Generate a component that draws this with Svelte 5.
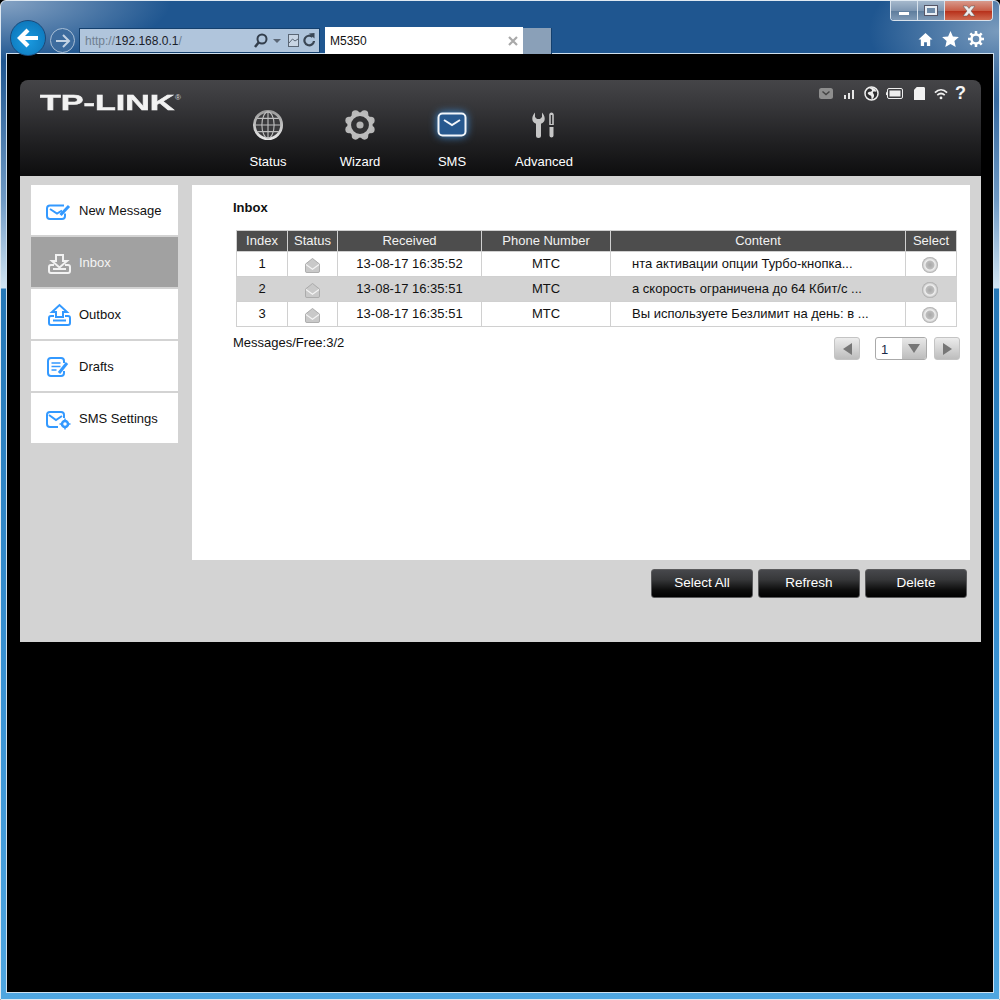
<script>
  const navItems = [
    { label: "Status", icon: "globe" },
    { label: "Wizard", icon: "gear" },
    { label: "SMS", icon: "mail", active: true },
    { label: "Advanced", icon: "tools" }
  ];

  const menu = [
    { label: "New Message", icon: "new" },
    { label: "Inbox", icon: "inbox", active: true },
    { label: "Outbox", icon: "outbox" },
    { label: "Drafts", icon: "drafts" },
    { label: "SMS Settings", icon: "settings" }
  ];

  const messages = [
    { index: 1, received: "13-08-17 16:35:52", phone: "МТС", content: "нта активации опции Турбо-кнопка..." },
    { index: 2, received: "13-08-17 16:35:51", phone: "МТС", content: "а скорость ограничена до 64 Кбит/с ..." },
    { index: 3, received: "13-08-17 16:35:51", phone: "МТС", content: "Вы используете Безлимит на день: в ..." }
  ];

  // bumps of the wizard gear
  const bumps = [0, 45, 90, 135, 180, 225, 270, 315].map((a) => ({
    x: 17 + 12.5 * Math.cos((a * Math.PI) / 180 + Math.PI / 8),
    y: 17 + 12.5 * Math.sin((a * Math.PI) / 180 + Math.PI / 8)
  }));
</script>

<div class="window">
  <div class="caption">
    <div class="controls">
      <span class="ctl"><i class="min"></i></span>
      <span class="ctl"><i class="max"></i></span>
      <span class="ctl close">
        <svg width="16" height="12" viewBox="0 0 16 12"><path d="M2 1h4l2 2.500L10 1h4l-4 5 4 5h-4L8 8.500 6 11H2l4-5z" fill="#eee" stroke="#555" stroke-width=".5"/></svg>
      </span>
    </div>
  </div>

  <div class="toolbar">
    <div class="back">
      <svg width="24" height="24" viewBox="0 0 24 24"><path d="M12 4 4 12l8 8M4.500 12H22" fill="none" stroke="#fff" stroke-width="4.200"/></svg>
    </div>
    <div class="forward">
      <svg width="16" height="16" viewBox="0 0 16 16"><path d="M8 2l6 6-6 6M13 8H1" fill="none" stroke="#c3d3e4" stroke-width="2"/></svg>
    </div>
    <div class="address">
      <span class="url">http://<b>192.168.0.1</b>/</span>
      <svg class="addr-icons" width="62" height="18" viewBox="0 0 62 18">
        <circle cx="9" cy="7" r="4.500" fill="none" stroke="#333e4c" stroke-width="2"/>
        <path d="M6 10 2 15" stroke="#333e4c" stroke-width="2.500"/>
        <path d="M20 7h8l-4 4z" fill="#5a6675"/>
        <rect x="35.500" y="2.500" width="10" height="12" fill="#c8d5e4" stroke="#5a6675"/>
        <path d="M36 11l3.500-4 2.500 2 3-2" fill="none" stroke="#5a6675"/>
        <path d="M59.500 5a4.800 4.800 0 1 0 1.500 4" fill="none" stroke="#3a4654" stroke-width="2.200"/>
        <path d="M56 1.500l5.500-.5 0 5.500z" fill="#3a4654"/>
      </svg>
    </div>
    <div class="tab">
      <span>M5350</span>
      <svg width="10" height="10" viewBox="0 0 10 10"><path d="M1 1l8 8M9 1l-8 8" stroke="#a9a9a9" stroke-width="2.200"/></svg>
    </div>
    <div class="newtab"></div>
    <div class="tools">
      <svg width="15" height="15" viewBox="0 0 16 16"><path d="M8 1 0.500 8H3v7h3.500v-4h3v4H13V8h2.500z" fill="#fff"/></svg>
      <svg width="17" height="16" viewBox="0 0 17 16"><path d="M8.500 0l2.400 5.500 6 .6-4.500 4 1.300 5.900-5.200-3-5.200 3 1.300-5.900-4.500-4 6-.6z" fill="#fff"/></svg>
      <svg width="16" height="16" viewBox="0 0 16 16"><circle cx="8" cy="8" r="4.500" fill="none" stroke="#fff" stroke-width="2.500"/><path d="M8 0v3M8 13v3M0 8h3M13 8h3M2.300 2.300l2.200 2.200M11.500 11.500l2.200 2.200M13.700 2.300l-2.200 2.200M4.500 11.500l-2.200 2.200" stroke="#fff" stroke-width="2.500"/></svg>
    </div>
  </div>

  <div class="viewport">
    <div class="panel">
      <header class="head">
        <div class="logo"><span class="logo-text">TP-LINK</span><sup>®</sup></div>
        <nav class="nav">
          {#each navItems as item}
            <div class="nav-item">
              <div class="nav-icon">
                {#if item.icon === "globe"}
                  <svg width="32" height="32" viewBox="0 0 34 34">
                    <defs>
                      <linearGradient id="ring" x1="0" y1="0" x2="0" y2="1">
                        <stop offset="0" stop-color="#9a9a9a" />
                        <stop offset=".6" stop-color="#c8c8c8" />
                        <stop offset="1" stop-color="#e6e6e6" />
                      </linearGradient>
                    </defs>
                    <circle cx="17" cy="17" r="14.500" fill="#3a3a3c" stroke="url(#ring)" stroke-width="3"/>
                    <g fill="none" stroke="#bdbdbd" stroke-width="1.200">
                      <ellipse cx="17" cy="17" rx="6.500" ry="14"/>
                      <path d="M17 3v28M3 17h28M5.500 10h23M5.500 24h23"/>
                    </g>
                  </svg>
                {:else if item.icon === "gear"}
                  <svg width="32" height="32" viewBox="0 0 34 34">
                    {#each bumps as b}
                      <circle cx={b.x} cy={b.y} r="4" fill="#b8b8b8"/>
                    {/each}
                    <circle cx="17" cy="17" r="11.500" fill="#323234" stroke="#bcbcbc" stroke-width="4"/>
                    <circle cx="17" cy="17" r="3.800" fill="#b4b4b4"/>
                  </svg>
                {:else if item.icon === "mail"}
                  <svg width="30" height="26" viewBox="0 0 30 26">
                    <rect x="1.500" y="1.500" width="27" height="22" rx="4" fill="#27598f" stroke="#f2f6fa" stroke-width="2"/>
                    <path d="M7 8l8 5 8-5" fill="none" stroke="#f2f6fa" stroke-width="2"/>
                  </svg>
                {:else}
                  <svg width="24" height="26" viewBox="0 0 24 26">
                    <path d="M3 .5C.5 3-.5 7 1 9.500c.6 1 1.600 1.700 3 2.300V23.500a2.500 2.500 0 0 0 5 0V11.800c1.400-.6 2.400-1.300 3-2.300C13.500 7 12.500 3 10 .5V5L8 7H5L3 5z" fill="#c6c6c6"/>
                    <path d="M19.500.5c-1.300 0-2.300 1-2.300 2.500v10h4.600V3c0-1.500-1-2.500-2.300-2.500zM17.500 15v8.500c0 1.300 1 2 2 2s2-.7 2-2V15z" fill="#c6c6c6"/>
                    <path d="M19.500 3v9" stroke="#2b2b2d" stroke-width="1.400"/>
                  </svg>
                {/if}
              </div>
              <span>{item.label}</span>
            </div>
          {/each}
        </nav>
        <div class="status-icons">
          <svg width="14" height="11" viewBox="0 0 14 11"><rect width="14" height="11" rx="2.500" fill="#8e8e8e"/><path d="M3.500 3.500 7 6.500l3.500-3" fill="none" stroke="#444" stroke-width="1.500"/></svg>
          <svg width="10" height="9" viewBox="0 0 10 9"><path d="M0 5h2v4H0zM4 3h2v6H4zM8 0h2v9H8z" fill="#e6e6e6"/></svg>
          <svg width="15" height="15" viewBox="0 0 15 15"><circle cx="7.500" cy="7.500" r="6.500" fill="#2f2f31" stroke="#eee" stroke-width="1.500"/><path d="M5 2c1 1 3 1 3 2.500S5 5.500 4 6.500 5 9 6.500 9.500 7 13 8 13.500c1-1 2.500-3 2-4.500S8.500 7 9 6s3 0 3.500-.5C11.500 3 9 1.500 7 1.500z" fill="#eee"/></svg>
          <svg width="17" height="11" viewBox="0 0 17 11"><rect x="1.500" y=".5" width="15" height="10" rx="1.500" fill="none" stroke="#eee"/><path d="M1.500 3 0 4.500v2L1.500 8z" fill="#eee"/><rect x="3.500" y="2.500" width="11" height="6" fill="#eee"/></svg>
          <svg width="11" height="13" viewBox="0 0 12 14"><path d="M3 0h7.500c.8 0 1.500.7 1.500 1.500V14H0V3z" fill="#f2f2f2"/></svg>
          <svg width="14" height="12" viewBox="0 0 15 12"><g fill="none" stroke="#f0f0f0" stroke-width="1.800"><path d="M1 4.500c4-4 9-4 13 0"/><path d="M3.500 7.300c2.500-2.300 5.500-2.300 8 0"/></g><circle cx="7.500" cy="10.200" r="1.500" fill="#f0f0f0"/></svg>
          <span class="help">?</span>
        </div>
      </header>

      <div class="body">
        <div class="columns">
          <aside class="menu">
            {#each menu as item}
              <div class="menu-item" class:active={item.active}>
                <span class="menu-icon">
                  <svg width="26" height="24" viewBox="0 0 26 24" fill="none" stroke={item.active ? "#f2f2f2" : "#3399ff"} stroke-width="2">
                    {#if item.icon === "new"}
                      <path d="M18 7.500H4a3 3 0 0 0-3 3V18a3 3 0 0 0 3 3h12a3 3 0 0 0 3-3v-2.500"/>
                      <path d="M4 11l7 4.500 5-3"/>
                      <path d="M14.500 17 23 8" stroke-width="3"/>
                    {:else if item.icon === "inbox"}
                      <path d="M8 15H5a2 2 0 0 0-2 2v4a2 2 0 0 0 2 2h17a2 2 0 0 0 2-2v-4a2 2 0 0 0-2-2h-3"/>
                      <path d="M7 19h13"/>
                      <path d="M10 5h7v6h4l-7.500 6.500L6 11h4z"/>
                    {:else if item.icon === "outbox"}
                      <path d="M8 14H5a2 2 0 0 0-2 2v5a2 2 0 0 0 2 2h17a2 2 0 0 0 2-2v-5a2 2 0 0 0-2-2h-3"/>
                      <path d="M7 18.500h13"/>
                      <path d="M10 15v-5H6l7.500-7L21 10h-4v5z"/>
                    {:else if item.icon === "drafts"}
                      <path d="M18 17v2a3 3 0 0 1-3 3H5a3 3 0 0 1-3-3V7a3 3 0 0 1 3-3h10a3 3 0 0 1 3 3v2"/>
                      <path d="M5.500 9h9M5.500 12.500h9M5.500 16h5" stroke-width="1.500"/>
                      <path d="M13 19l8-10" stroke-width="3"/>
                    {:else}
                      <path d="M12 21H4a3 3 0 0 1-3-3V9a3 3 0 0 1 3-3h11a3 3 0 0 1 3 3v3"/>
                      <path d="M3 9l7 5 6-4"/>
                      <circle cx="19" cy="18" r="3" stroke-width="2.500"/>
                      <path d="M19 12.500v2M19 21.500v2M13.500 18h2M22.500 18h2" stroke-width="1.500"/>
                    {/if}
                  </svg>
                </span>
                <span>{item.label}</span>
              </div>
            {/each}
          </aside>

          <main class="content">
            <h2>Inbox</h2>
            <table>
              <colgroup>
                <col style="width:51px" />
                <col style="width:50px" />
                <col style="width:144px" />
                <col style="width:129px" />
                <col style="width:295px" />
                <col style="width:51px" />
              </colgroup>
              <thead>
                <tr>
                  <th>Index</th>
                  <th>Status</th>
                  <th>Received</th>
                  <th>Phone Number</th>
                  <th>Content</th>
                  <th>Select</th>
                </tr>
              </thead>
              <tbody>
                {#each messages as msg}
                  <tr>
                    <td>{msg.index}</td>
                    <td class="icon-cell">
                      <svg width="15" height="15" viewBox="0 0 16 16">
                        <path d="M.5 6.500 8 .5l7.500 6V14a1.500 1.500 0 0 1-1.500 1.500H2A1.500 1.500 0 0 1 .5 14z" fill="#c9c9c9" stroke="#a8a8a8"/>
                        <path d="M1 7l7 5 7-5" fill="none" stroke="#f4f4f4" stroke-width="1.200"/>
                      </svg>
                    </td>
                    <td>{msg.received}</td>
                    <td>{msg.phone}</td>
                    <td class="text">{msg.content}</td>
                    <td class="icon-cell select"><span class="radio"></span></td>
                  </tr>
                {/each}
              </tbody>
            </table>
            <div class="under">
              <span class="free">Messages/Free:3/2</span>
              <div class="pager">
                <span class="page-btn"><i class="tri left"></i></span>
                <div class="page-select">
                  <span class="val">1</span>
                  <span class="drop"><i class="tri down"></i></span>
                </div>
                <span class="page-btn"><i class="tri right"></i></span>
              </div>
            </div>
          </main>
        </div>

        <div class="actions">
          <button>Select All</button>
          <button>Refresh</button>
          <button>Delete</button>
        </div>
      </div>
    </div>
  </div>
</div>

<style>
  :global(body) {
    margin: 0;
    background: #000;
  }

  .window {
    box-sizing: border-box;
    width: 1000px;
    height: 1000px;
    display: flex;
    flex-direction: column;
    font-family: "Liberation Sans", Arial, sans-serif;
    border: 1px solid #dfe9f2;
    border-radius: 6px 6px 0 0;
    overflow: hidden;
    background:
      radial-gradient(ellipse 170px 60px at 0 0, #86a3c4 0%, rgba(134, 163, 196, 0) 100%),
      radial-gradient(ellipse 130px 70px at 100% 30px, #7a9bbd 0%, rgba(122, 155, 189, 0) 100%),
      linear-gradient(to bottom, #1f5690 0, #1f5690 60px, #6f9ac5 200px, #d3e6f4 287px, #2577b6 288px, #3a93d4 700px, #4fa6e0 100%);
  }

  /* window caption */
  .caption {
    height: 19px;
    display: flex;
    justify-content: flex-end;
    padding-right: 6px;
    flex: none;
  }
  .controls {
    display: flex;
    width: 103px;
    height: 20px;
    box-sizing: border-box;
    border: 1px solid #d8e2ec;
    border-top: 0;
    border-radius: 0 0 4px 4px;
    overflow: hidden;
  }
  .ctl {
    width: 27px;
    flex: none;
    box-sizing: border-box;
    display: flex;
    align-items: center;
    justify-content: center;
    background: linear-gradient(to bottom, #a5b8cc, #7f98b3 50%, #5d7c9c 52%, #7f9ab6);
    border-right: 1px solid #d8e2ec;
  }
  .close {
    flex: 1;
    border: 0;
    background: linear-gradient(to bottom, #d89a8c, #c85e48 50%, #b8321c 55%, #d06a50);
  }
  .min {
    width: 10px;
    height: 3px;
    margin-top: 6px;
    background: #fff;
  }
  .max {
    width: 8px;
    height: 5px;
    border: 2px solid #e8eef4;
    background: #6d8aa8;
    box-shadow: 0 0 0 1px #556;
  }

  /* browser toolbar */
  .toolbar {
    height: 34px;
    flex: none;
    display: flex;
    align-items: flex-end;
    padding-left: 9px;
    position: relative;
  }
  .back {
    width: 36px;
    height: 36px;
    box-sizing: border-box;
    margin-bottom: -2px;
    border-radius: 50%;
    background: radial-gradient(circle at 50% 60%, #1a9ae0, #0a6fb2);
    border: 1px solid #1b4a7a;
    display: flex;
    align-items: center;
    justify-content: center;
  }
  .forward {
    width: 25px;
    height: 25px;
    box-sizing: border-box;
    margin: 0 4px 1px 4px;
    border-radius: 50%;
    border: 1px solid #a9bfd6;
    background: #3d6c9e;
    display: flex;
    align-items: center;
    justify-content: center;
  }
  .address {
    width: 241px;
    height: 25px;
    box-sizing: border-box;
    margin-bottom: 1px;
    border: 1px solid #14406e;
    background: #b0c5dc;
    display: flex;
    align-items: center;
    justify-content: space-between;
    padding: 0 4px 0 5px;
    font-size: 12px;
    color: #6f7f90;
  }
  .url b {
    font-weight: normal;
    color: #1a2029;
  }
  .addr-icons {
    flex: none;
  }
  .tab {
    width: 198px;
    height: 27px;
    box-sizing: border-box;
    margin-left: 5px;
    background: #fff;
    display: flex;
    align-items: center;
    justify-content: space-between;
    padding: 0 5px;
    font-size: 12px;
    color: #111;
  }
  .newtab {
    width: 28px;
    height: 26px;
    background: #8aa0b8;
    border-right: 1px solid #14406e;
  }
  .tools {
    margin-left: auto;
    display: flex;
    gap: 9px;
    padding: 0 15px 7px 0;
    align-items: center;
  }

  /* page area */
  .viewport {
    flex: 1;
    margin: 0 6px 7px 6px;
    background: #000;
    box-shadow: 0 0 0 1px #cfe0ee;
    padding: 26px 12px 0 13px;
    min-height: 0;
  }
  .panel {
    width: 961px;
  }
  .head {
    height: 96px;
    box-sizing: border-box;
    border-radius: 8px 8px 0 0;
    background: linear-gradient(to bottom, #454548 0, #38383b 25%, #202022 65%, #0d0d0e 100%);
    display: flex;
    position: relative;
    color: #fff;
  }
  .logo {
    width: 202px;
    flex: none;
    padding: 10px 0 0 20px;
    box-sizing: border-box;
    display: flex;
    align-items: flex-start;
    position: relative;
  }
  .logo-text {
    display: inline-block;
    font-weight: bold;
    font-size: 22px;
    line-height: 26px;
    color: #f2f2f2;
    -webkit-text-stroke: 0.5px #f2f2f2;
    transform: scaleX(1.55);
    transform-origin: left center;
  }
  .logo sup {
    position: absolute;
    left: 155px;
    top: 14px;
    font-size: 8px;
    line-height: 8px;
    color: #ddd;
  }
  .nav {
    display: flex;
  }
  .nav-item {
    width: 92px;
    display: flex;
    flex-direction: column;
    align-items: center;
    font-size: 13px;
    padding-top: 29px;
    box-sizing: border-box;
  }
  .nav-icon {
    height: 32px;
    display: flex;
    align-items: center;
    justify-content: center;
    margin-bottom: 13px;
  }
  .nav-item:nth-child(3) .nav-icon svg {
    filter: drop-shadow(0 0 4px #3d8fdc);
  }
  .nav-item span {
    line-height: 15px;
  }
  .status-icons {
    position: absolute;
    top: 6px;
    right: 15px;
    display: flex;
    align-items: center;
    height: 15px;
  }
  .status-icons svg:nth-child(2) {
    margin: 2px 0 0 11px;
  }
  .status-icons svg:nth-child(3) {
    margin-left: 10px;
  }
  .status-icons svg:nth-child(4) {
    margin-left: 7px;
  }
  .status-icons svg:nth-child(5) {
    margin-left: 11px;
  }
  .status-icons svg:nth-child(6) {
    margin-left: 9px;
  }
  .help {
    font-weight: bold;
    font-size: 18px;
    line-height: 15px;
    color: #f5f5f5;
    margin-left: 7px;
  }

  .body {
    height: 466px;
    box-sizing: border-box;
    background: #d3d3d3;
    padding: 9px 11px 0 11px;
  }
  .columns {
    display: flex;
    gap: 14px;
  }
  .menu {
    width: 147px;
    flex: none;
    display: flex;
    flex-direction: column;
    gap: 2px;
  }
  .menu-item {
    height: 50px;
    background: #fff;
    display: flex;
    align-items: center;
    font-size: 13px;
    color: #111;
    padding-left: 15px;
    box-sizing: border-box;
  }
  .menu-item.active {
    background: #a1a1a1;
    color: #f4f4f4;
  }
  .menu-icon {
    width: 33px;
    display: flex;
    flex: none;
  }
  .content {
    flex: 1;
    height: 375px;
    box-sizing: border-box;
    background: #fff;
    padding: 16px 10px 0 41px;
  }
  h2 {
    margin: 0 0 15px;
    font-size: 13px;
    line-height: 14px;
    font-weight: bold;
    color: #111;
  }
  table {
    table-layout: fixed;
    width: 721px;
    margin-left: 3px;
    border-collapse: collapse;
    font-size: 13px;
    color: #111;
  }
  th {
    height: 18px;
    padding: 0 0 2px;
    background: #4d4d4d;
    color: #f2f2f2;
    font-weight: normal;
    border: 1px solid #d0d0d0;
  }
  td {
    height: 22px;
    padding: 0 0 2px;
    text-align: center;
    border: 1px solid #d0d0d0;
    white-space: nowrap;
    overflow: hidden;
  }
  tbody tr:nth-child(2) td {
    background: #d3d3d3;
    border-left-color: #d3d3d3;
    border-right-color: #d3d3d3;
  }
  td.text {
    text-align: left;
    padding-left: 21px;
  }
  td.icon-cell {
    padding: 2px 0 0;
  }
  td.select {
    padding-right: 2px;
  }
  .icon-cell svg,
  .radio {
    vertical-align: middle;
  }
  .radio {
    display: inline-block;
    width: 16px;
    height: 16px;
    border-radius: 50%;
    background: radial-gradient(circle closest-side, #a8a8a8 0, #bdbdbd 50%, #efefef 62%, #dcdcdc 78%, #a5a5a5 100%);
  }
  .under {
    display: flex;
    justify-content: space-between;
    margin-top: 7px;
  }
  .free {
    font-size: 13px;
    line-height: 18px;
    color: #111;
  }
  .pager {
    display: flex;
    align-items: center;
    gap: 15px;
    margin-top: 3px;
  }
  .page-btn {
    width: 26px;
    height: 23px;
    box-sizing: border-box;
    border: 1px solid #c4c4c4;
    border-radius: 3px;
    background: linear-gradient(to bottom, #ececec, #bdbdbd);
    display: flex;
    align-items: center;
    justify-content: center;
  }
  .page-select {
    width: 52px;
    height: 23px;
    margin-right: -8px;
    box-sizing: border-box;
    border: 1px solid #aaa;
    border-radius: 3px;
    display: flex;
    overflow: hidden;
    font-size: 13px;
    color: #1a2a4a;
  }
  .val {
    flex: 1;
    padding-left: 5px;
    line-height: 23px;
  }
  .drop {
    width: 24px;
    background: linear-gradient(to bottom, #e8e8e8, #bcbcbc);
    display: flex;
    align-items: center;
    justify-content: center;
  }
  .tri {
    width: 0;
    height: 0;
    display: block;
    border-style: solid;
    border-color: transparent;
  }
  .tri.left {
    border-width: 6px 9px 6px 0;
    border-right-color: #777;
  }
  .tri.right {
    border-width: 6px 0 6px 9px;
    border-left-color: #777;
  }
  .tri.down {
    border-width: 9px 6px 0 6px;
    border-top-color: #777;
  }
  .actions {
    display: flex;
    justify-content: flex-end;
    gap: 5px;
    margin-top: 9px;
    padding-right: 3px;
  }
  button {
    width: 102px;
    height: 29px;
    padding: 0 0 3px;
    border: 1px solid #5a5a5c;
    border-radius: 3px;
    background: linear-gradient(to bottom, #47484c 0, #37383a 35%, #0c0c0c 75%, #000 100%);
    color: #fff;
    font-family: inherit;
    font-size: 13.500px;
  }
</style>
